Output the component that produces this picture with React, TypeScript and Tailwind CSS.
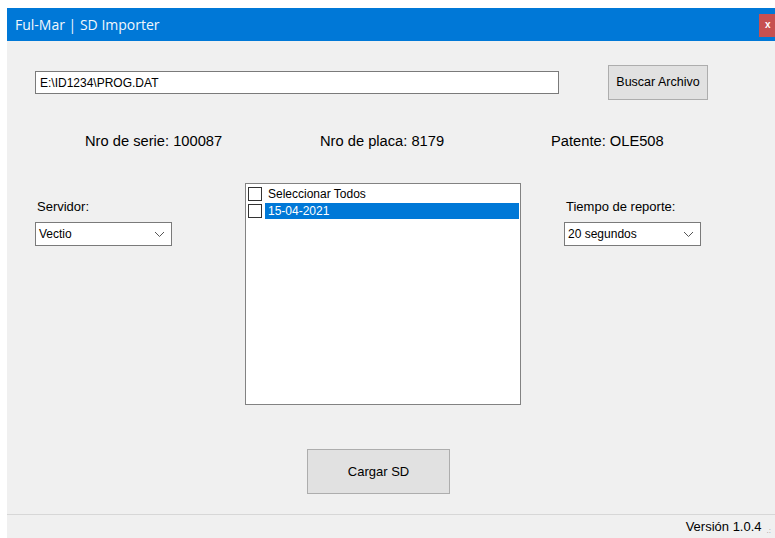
import React, { useState } from 'react';

const Combo: React.FC<{ value: string }> = ({ value }) => (
    <div className="w-[137px] h-[24px] bg-white border border-[#7a7a7a] flex items-center justify-between pl-[3px] pr-[6px]">
        <span className="text-[12px] text-black">{value}</span>
        <svg width="11" height="7" viewBox="0 0 11 7" fill="none">
            <path d="M1 1l4.5 4.5L10 1" stroke="#555" strokeWidth="1" />
        </svg>
    </div>
);

const Check: React.FC<{ checked?: boolean }> = ({ checked }) => (
    <div className="w-[14px] h-[14px] bg-white border border-[#333] shrink-0 flex items-center justify-center">
        {checked && <span className="text-[10px] leading-none">✓</span>}
    </div>
);

const App: React.FC = () => {
    const [dates] = useState(['15-04-2021']);

    return (
        <div className="w-[775px] h-[538px] bg-white pl-[7px] pt-[8px] overflow-hidden" style={{ fontFamily: '"Liberation Sans", Arial, sans-serif' }}>
            <div className="w-[780px] h-[530px] flex flex-col">
                {/* title bar */}
                <div className="h-[33px] bg-[#0078d7] flex items-center justify-between shrink-0">
                    <span className="pl-[8px] text-[14px] text-[#f2f7fc]" style={{ fontFamily: '"Open Sans", "Noto Sans", sans-serif' }}>
                        Ful-Mar | SD Importer
                    </span>
                    <div className="w-[21px] h-[23px] bg-[#c75050] mr-[7px] mt-[1px] flex items-center justify-start pl-[6px]">
                        <span className="text-white text-[10px] font-bold leading-none">x</span>
                    </div>
                </div>

                <div className="flex-1 bg-[#f0f0f0] flex flex-col">
                    {/* file path row */}
                    <div className="flex items-center mt-[24px] pl-[28px] h-[35px]">
                        <div className="w-[524px] h-[23px] bg-white border border-[#7a7a7a] flex items-center pl-[4px]">
                            <span className="text-[12px] text-black">E:\ID1234\PROG.DAT</span>
                        </div>
                        <button className="ml-[49px] w-[100px] h-[35px] bg-[#e1e1e1] border border-[#adadad] text-[12.5px] text-black">
                            Buscar Archivo
                        </button>
                    </div>

                    {/* device info */}
                    <div className="flex mt-[33px] pl-[78px] text-[14.7px] text-black h-[16px] leading-[16px]">
                        <span className="w-[235px]">Nro de serie: 100087</span>
                        <span className="w-[231px]">Nro de placa: 8179</span>
                        <span>Patente: OLE508</span>
                    </div>

                    {/* options row */}
                    <div className="flex mt-[34px] h-[222px]">
                        <div className="pl-[28px] w-[238px] flex flex-col">
                            <span className="mt-[16px] pl-[2px] text-[13px] text-black leading-[15px]">Servidor:</span>
                            <div className="mt-[8px]">
                                <Combo value="Vectio" />
                            </div>
                        </div>

                        <div className="w-[276px] h-[222px] bg-white border border-[#828282] pt-[2px] pl-[2px] pr-[1px]">
                            <div className="flex items-center h-[16px] gap-[6px]">
                                <Check />
                                <span className="text-[12px] text-black">Seleccionar Todos</span>
                            </div>
                            {dates.map((d) => (
                                <div key={d} className="flex items-center h-[17px]">
                                    <Check />
                                    <div className="flex-1 ml-[3px] h-[16px] bg-[#0078d7] flex items-center pl-[3px]">
                                        <span className="text-[12px] text-white">{d}</span>
                                    </div>
                                </div>
                            ))}
                        </div>

                        <div className="pl-[43px] flex flex-col">
                            <span className="mt-[16px] pl-[2px] text-[13px] text-black leading-[15px]">Tiempo de reporte:</span>
                            <div className="mt-[8px]">
                                <Combo value="20 segundos" />
                            </div>
                        </div>
                    </div>

                    {/* load button */}
                    <div className="flex mt-[44px] pl-[300px]">
                        <button className="w-[143px] h-[45px] bg-[#e1e1e1] border border-[#adadad] text-[13px] text-black">
                            Cargar SD
                        </button>
                    </div>

                    {/* status strip */}
                    <div className="mt-auto border-t border-[#d7d7d7] h-[24px] flex items-center justify-end pr-[16px]">
                        <span className="text-[13px] text-black">Versión 1.0.4</span>
                        <span className="ml-[5px] mt-[8px] text-[8px] text-[#9a9a9a] leading-none">.:</span>
                    </div>
                </div>
            </div>
        </div>
    );
};

export default App;
